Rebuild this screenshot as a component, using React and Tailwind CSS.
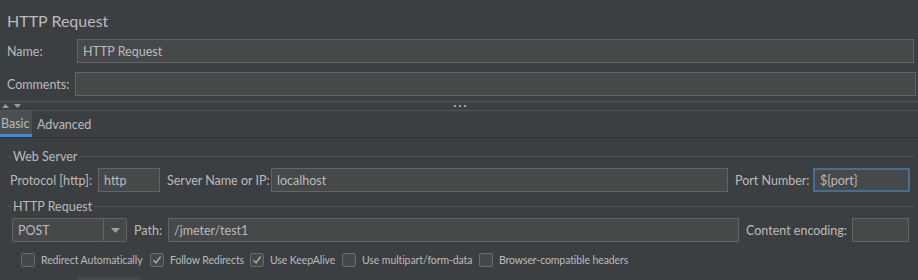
import React from 'react';

const font = { fontFamily: 'Lato, "Noto Sans", sans-serif' };

function Field({ value = '', className = '', focused = false }) {
  return (
    <div
      className={`h-[24px] flex items-center pt-[3px] px-[5px] text-[12.5px] text-[#bbbbbb] bg-[#45494a] ${
        focused ? 'border-2 border-[#466d94] px-[4px]' : 'border border-[#646464]'
      } ${className}`}
    >
      {value}
    </div>
  );
}

function Label({ children, className = '' }) {
  return <div className={`flex items-center pt-[3px] whitespace-nowrap ${className}`}>{children}</div>;
}

function Legend({ title }) {
  return (
    <div className="flex items-center h-[16px] pl-[8px] pr-[5px]">
      <div className="w-[3px] h-px bg-[#555555]" />
      <span className="px-[2px] pt-[2px] text-[12.5px] leading-[16px]">{title}</span>
      <div className="flex-1 h-px bg-[#555555]" />
    </div>
  );
}

function Check({ label, checked, width }) {
  return (
    <div className="flex items-center h-[14px] shrink-0" style={width ? { width } : undefined}>
      <div className="w-[14px] h-[14px] rounded-[2px] border border-[#6b6b6b] bg-[#43494a] flex items-center justify-center">
        {checked && (
          <svg width="10" height="10" viewBox="0 0 10 10">
            <path d="M1.5 5.2 L4 7.8 L8.6 1.5" fill="none" stroke="#a9a9a9" strokeWidth="1.4" />
          </svg>
        )}
      </div>
      <span className="ml-[6px] pt-[2px] text-[10.5px] tracking-[-0.1px] whitespace-nowrap">{label}</span>
    </div>
  );
}

export default function App() {
  return (
    <div className="w-[918px] h-[280px] overflow-hidden bg-[#3c3f41] text-[#bbbbbb] select-none" style={font}>
      {/* Title */}
      <div className="h-[33px] pt-[9px] pl-[7px] text-[16px] leading-[24px]">HTTP Request</div>

      {/* Name */}
      <div className="flex mt-[6px] h-[24px] pr-[4px] text-[12.5px]">
        <Label className="w-[77px] pl-[7px]">Name:</Label>
        <Field value="HTTP Request" className="flex-1" />
      </div>

      {/* Comments */}
      <div className="flex mt-[9px] h-[24px] pr-[2px] text-[12.5px]">
        <Label className="w-[75px] pl-[7px]">Comments:</Label>
        <Field className="flex-1" />
      </div>

      {/* Split divider */}
      <div className="mt-[5px] h-[10px] border-t border-b border-[#555555] flex items-center relative">
        <div className="flex items-center gap-[5px] pl-[2px]">
          <svg width="7" height="4" viewBox="0 0 7 4"><path d="M0 4 L3.5 0 L7 4 Z" fill="#9a9a9a" /></svg>
          <svg width="7" height="4" viewBox="0 0 7 4"><path d="M0 0 L7 0 L3.5 4 Z" fill="#9a9a9a" /></svg>
        </div>
        <div className="absolute left-[454px] top-[3px] flex gap-[3px]">
          <div className="w-[2px] h-[2px] bg-[#a0a0a0]" />
          <div className="w-[2px] h-[2px] bg-[#a0a0a0]" />
          <div className="w-[2px] h-[2px] bg-[#a0a0a0]" />
        </div>
      </div>

      {/* Tabs */}
      <div className="flex h-[27px] border-b border-[#303234] text-[12.5px]">
        <div className="w-[32px] bg-[#4b4f52] border-b-[3px] border-[#4a88c7] flex items-center pl-[1px] pt-[4px]">
          Basic
        </div>
        <Label className="ml-[5px] pt-[3px]">Advanced</Label>
      </div>

      {/* Web Server */}
      <div className="mt-[10px]">
        <Legend title="Web Server" />
      </div>
      <div className="flex mt-[4px] h-[24px] pl-[10px] pr-[8px] text-[12.5px]">
        <Label className="w-[88px]">Protocol [http]:</Label>
        <Field value="http" className="w-[62px]" />
        <Label className="ml-[7px] w-[104px]">Server Name or IP:</Label>
        <Field value="localhost" className="flex-1" />
        <Label className="ml-[7px] w-[78px]">Port Number:</Label>
        <Field value="${port}" className="w-[97px]" focused />
      </div>

      {/* HTTP Request */}
      <div className="mt-[6px]">
        <Legend title="HTTP Request" />
      </div>
      <div className="flex mt-[4px] h-[24px] pl-[12px] pr-[9px] text-[12.5px]">
        <div className="w-[115px] flex border border-[#646464] bg-[#45494a] rounded-[2px]">
          <Label className="flex-1 pl-[5px]">POST</Label>
          <div className="w-[23px] border-l border-[#646464] flex items-center justify-center">
            <svg width="9" height="5" viewBox="0 0 9 5"><path d="M0 0 L9 0 L4.5 5 Z" fill="#a0a0a0" /></svg>
          </div>
        </div>
        <Label className="ml-[7px] w-[34px]">Path:</Label>
        <Field value="/jmeter/test1" className="flex-1" />
        <Label className="ml-[7px] w-[106px]">Content encoding:</Label>
        <Field className="w-[57px]" />
      </div>

      {/* Options */}
      <div className="flex mt-[11px] pl-[21px]">
        <Check label="Redirect Automatically" width={129} />
        <Check label="Follow Redirects" checked width={100} />
        <Check label="Use KeepAlive" checked width={92} />
        <Check label="Use multipart/form-data" width={137} />
        <Check label="Browser-compatible headers" />
      </div>

      <div className="mt-[10px] ml-[78px] w-[63px] h-[4px] bg-[#45494a]" />
    </div>
  );
}
